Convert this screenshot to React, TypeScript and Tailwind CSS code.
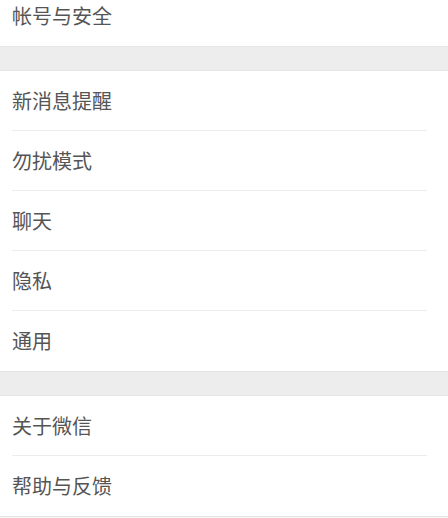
import React from "react";

const font = { fontFamily: '"Noto Sans CJK SC", "Noto Sans", sans-serif' };

function Row({ label, divider }: { label: string; divider: boolean }) {
  return (
    <div className="bg-white pl-3">
      <div
        className={`h-[60px] flex items-center text-[20px] font-normal text-[#555555] mr-[21px] ${
          divider ? "border-b border-[#ececec]" : ""
        }`}
      >
        {label}
      </div>
    </div>
  );
}

function Band() {
  return <div className="h-[25px] bg-[#ededed] border-y border-[#e6e6e6]" />;
}

export default function App() {
  return (
    <div className="w-[448px] h-[518px] overflow-hidden bg-white" style={font}>
      <div className="-mt-[14px]">
        <Row label="帐号与安全" divider={false} />
        <Band />
        <Row label="新消息提醒" divider />
        <Row label="勿扰模式" divider />
        <Row label="聊天" divider />
        <Row label="隐私" divider />
        <Row label="通用" divider={false} />
        <Band />
        <Row label="关于微信" divider />
        <Row label="帮助与反馈" divider={false} />
        <div className="h-[1px] bg-[#e3e3e3]" />
        <div className="h-[10px] bg-[#f5f5f5]" />
      </div>
    </div>
  );
}
